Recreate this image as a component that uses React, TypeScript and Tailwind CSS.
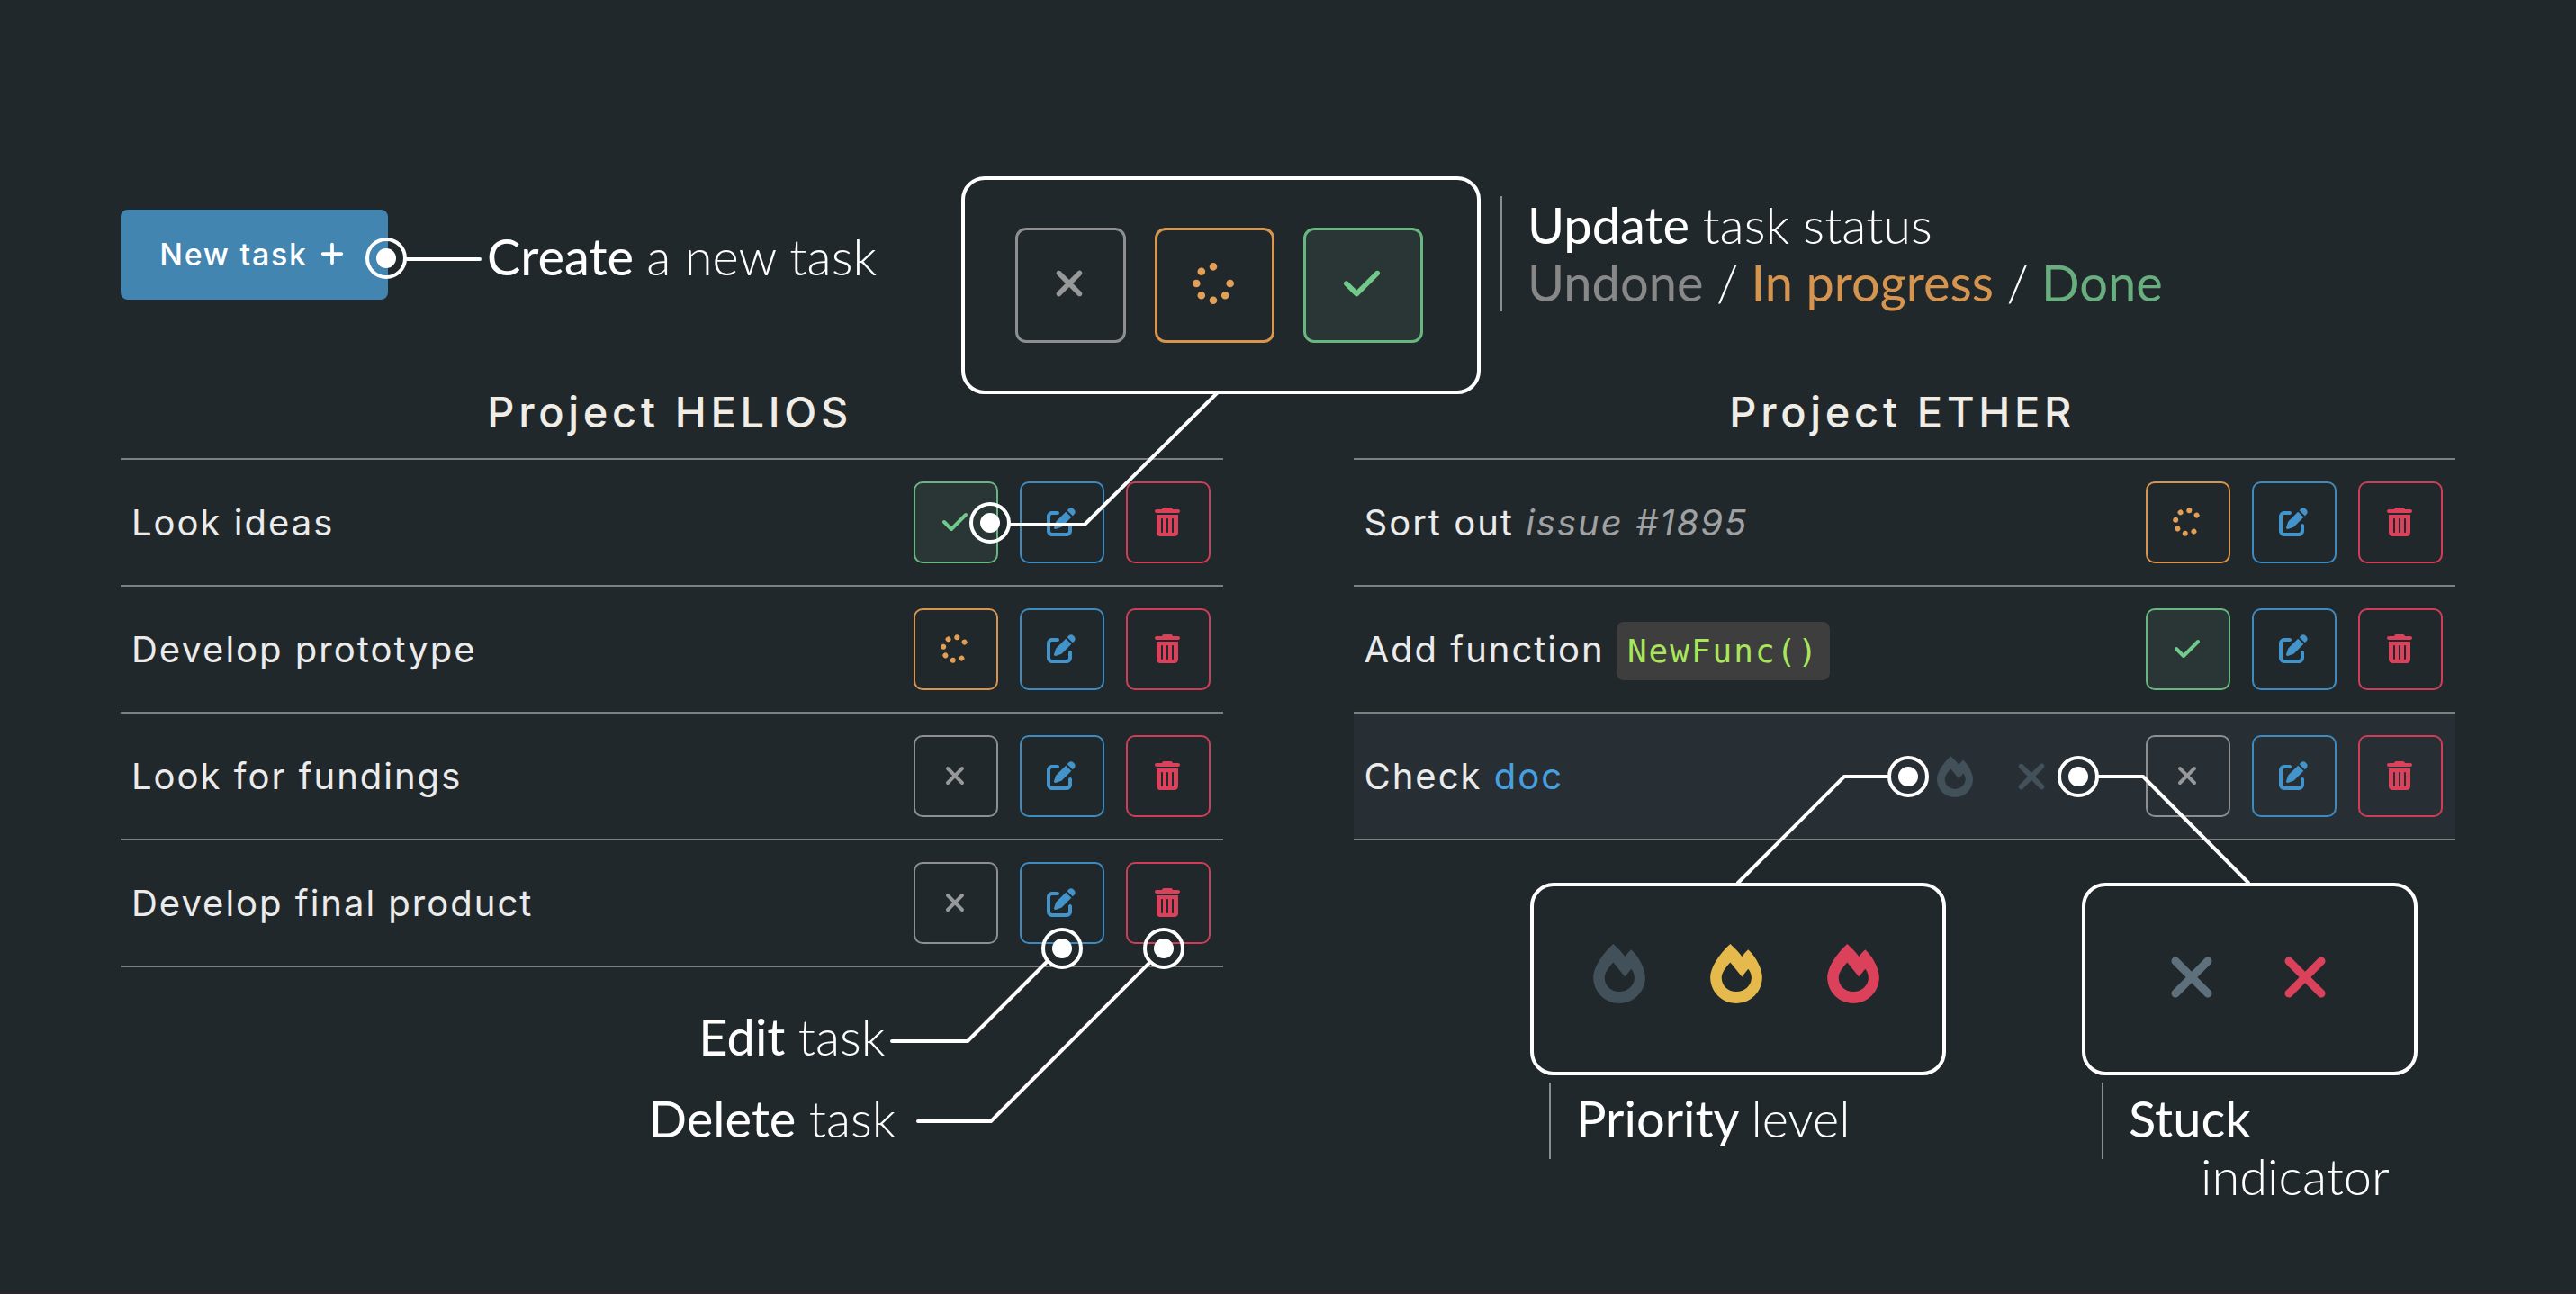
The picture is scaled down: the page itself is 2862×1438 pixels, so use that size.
import type { ReactNode } from "react";
import { FaCheck, FaPenToSquare, FaPlus, FaSpinner, FaTrashCan, FaXmark } from "react-icons/fa6";

type Status = "undone" | "progress" | "done";

/* Callout marker: a ringed dot with a leader line, drawn from the dot's centre. */
function Pin({ points, className }: { points: string; className: string }) {
  return (
    <svg aria-hidden="true" className={`pointer-events-none absolute z-10 size-px overflow-visible ${className}`}>
      <polyline points={points} fill="none" stroke="#fff" strokeWidth="4" strokeLinecap="round" strokeLinejoin="round" />
      <circle r="21" fill="none" stroke="#fff" strokeWidth="4" />
      <circle r="11" fill="#fff" />
    </svg>
  );
}

function Flame({ className }: { className: string }) {
  return (
    <svg aria-hidden="true" viewBox="0 0 174 199" fill="currentColor" className={className}>
      <path
        fillRule="evenodd"
        d="M67 0C82 14 95 27 106 42C112 34 119 26 127 19C155 45 174 86 174 111C174 160 136 199 87 199C38 199 0 160 0 111C0 82 27 36 67 0ZM67 62C50 80 38 98 38 113C38 141 60 160 87 160C114 160 138 140 138 113C138 103 134 93 127 84L106 110Z"
      />
    </svg>
  );
}

const statusStyle: Record<Status, string> = {
  undone: "border-[#8e8f90] text-[#979899]",
  progress: "border-[#d8954e] text-[#e39f55]",
  done: "border-[#69b780] bg-[#293635] text-[#72c98c]",
};

const statusLabel: Record<Status, string> = { undone: "Undone", progress: "In progress", done: "Done" };

function StatusIcon({ status }: { status: Status }) {
  if (status === "undone") return <FaXmark />;
  if (status === "progress") return <FaSpinner />;
  return <FaCheck />;
}

const rowButton = "relative flex h-[91px] w-[94px] items-center justify-center rounded-[10px] border-2 pr-[2px] pb-[2px] text-[32px]";

type TaskProps = {
  name: ReactNode;
  status: Status;
  hovered?: boolean;
  statusPin?: ReactNode;
  editPin?: ReactNode;
  deletePin?: ReactNode;
};

function Task({ name, status, hovered, statusPin, editPin, deletePin }: TaskProps) {
  return (
    <tr className={hovered ? "bg-[#272f35]" : ""}>
      <td className="h-[141px] border-b-2 border-[#7d8082] pl-3 text-[40px] tracking-wider text-[#ebebeb]">{name}</td>
      <td className="h-[141px] border-b-2 border-[#7d8082] pr-[14px]">
        <div className="flex items-center justify-end gap-6">
          {hovered && (
            <div className="relative mr-20 flex items-center gap-[42px] text-[#42505a]">
              <Pin className="top-1/2 -left-8" points="-23,0 -71,0 -189,118" />
              <button aria-label="Priority level">
                <Flame className="h-[46px] w-10" />
              </button>
              <button aria-label="Stuck indicator" className="text-[46px]">
                <FaXmark />
              </button>
              <Pin className="top-1/2 -right-[30px]" points="23,0 72,0 189,118" />
            </div>
          )}
          <button aria-label={statusLabel[status]} className={`${rowButton} ${statusStyle[status]}`}>
            <span className={status === "progress" ? "rotate-[55deg]" : ""}>
              <StatusIcon status={status} />
            </span>
            {statusPin}
          </button>
          <button aria-label="Edit" className={`${rowButton} border-[#3f8bc0] text-[#4294ca]`}>
            <FaPenToSquare />
            {editPin}
          </button>
          <button aria-label="Delete" className={`${rowButton} border-[#cf3e58] text-[#dc415b]`}>
            <FaTrashCan />
            {deletePin}
          </button>
        </div>
      </td>
    </tr>
  );
}

function Project({ title, children }: { title: string; children: ReactNode }) {
  return (
    <>
      <h2 className="h-[71px] pr-1 text-center text-[47px] leading-10 font-medium tracking-widest text-[#f0ede6]">{title}</h2>
      <table className="w-full border-separate border-spacing-0 border-t-2 border-[#7d8082]">
        <tbody>{children}</tbody>
      </table>
    </>
  );
}

const note = "font-['Lato',sans-serif] text-[56px] leading-[64px] whitespace-nowrap text-white";
const card = "flex items-center rounded-[26px] border-4 border-white bg-[#21282b]";
const optionButton = "flex h-32 items-center justify-center rounded-xl border-[3px] pr-1 pb-1 text-[46px]";

export default function App() {
  return (
    <main className="min-h-screen border-b-2 border-[#2a2630] bg-[#21282b] px-[134px] pt-[196px] font-['Inter',sans-serif]">
      <header className="grid grid-cols-[934fr_1660fr]">
        <div className="flex items-start pt-[37px]">
          <button className="relative flex h-[100px] w-[297px] items-center justify-center gap-3 rounded-lg bg-[#4285b1] pr-1 pb-[2px] text-[34px] font-medium tracking-wider text-white">
            New task
            <FaPlus className="text-[30px]" />
            <Pin className="top-[54px] right-px" points="23,1 104,1" />
          </button>
          <p className={`${note} ml-[110px] pt-5`}>
            Create <span className="font-light">a new task</span>
          </p>
        </div>
        <div className="flex items-start">
          <div className={`${card} h-[242px] w-[577px] justify-center gap-8 pr-1`}>
            <button aria-label="Undone" className={`${optionButton} w-[123px] ${statusStyle.undone}`}>
              <StatusIcon status="undone" />
            </button>
            <button aria-label="In progress" className={`${optionButton} w-[133px] ${statusStyle.progress}`}>
              <StatusIcon status="progress" />
            </button>
            <button aria-label="Done" className={`${optionButton} w-[133px] ${statusStyle.done}`}>
              <StatusIcon status="done" />
            </button>
          </div>
          <p className={`${note} mt-[22px] ml-[22px] border-l-2 border-[#8b8e8f] pl-7`}>
            Update <span className="font-light">task status</span>
            <br />
            <span className="text-[#888888]">Undone</span> <span className="font-light">/</span>{" "}
            <span className="text-[#d5954f]">In progress</span> <span className="font-light">/</span>{" "}
            <span className="text-[#68ae7e]">Done</span>
          </p>
        </div>
      </header>

      <div className="grid grid-cols-2 gap-[145px]">
        <section>
          <Project title="Project HELIOS">
            <Task
              name="Look ideas"
              status="done"
              statusPin={<Pin className="top-1/2 right-[6px]" points="23,2 105,2 253,-145" />}
            />
            <Task name="Develop prototype" status="progress" />
            <Task name="Look for fundings" status="undone" />
            <Task
              name="Develop final product"
              status="undone"
              editPin={<Pin className="-bottom-2 left-1/2" points="-17,15 -105,103 -189,103" />}
              deletePin={<Pin className="-bottom-2 left-10" points="-17,17 -192,192 -273,192" />}
            />
          </Project>
          <p className={`${note} mt-[45px] pr-[375px] text-right`}>
            Edit <span className="font-light">task</span>
          </p>
          <p className={`${note} mt-[27px] pr-[363px] text-right`}>
            Delete <span className="font-light">task</span>
          </p>
        </section>

        <section>
          <Project title="Project ETHER">
            <Task
              name={
                <>
                  Sort out <em className="text-[#a0a1a2]">issue #1895</em>
                </>
              }
              status="progress"
            />
            <Task
              name={
                <>
                  Add function{" "}
                  <code className="rounded-lg bg-[#3e3e3e] px-3 py-3 font-['DejaVu_Sans_Mono',monospace] text-[36px] text-[#a9e65c]">
                    NewFunc()
                  </code>
                </>
              }
              status="done"
            />
            <Task
              name={
                <>
                  Check{" "}
                  <a href="#doc" className="text-[#489fe0]">
                    doc
                  </a>
                </>
              }
              status="undone"
              hovered
            />
          </Project>
          <div className="mt-[47px] flex justify-end gap-[151px] pr-[42px]">
            <div className="w-[462px]">
              <div className={`${card} h-[214px] justify-center gap-[72px] pr-1 pb-3`}>
                <Flame className="h-[66px] w-[58px] text-[#42505a]" />
                <Flame className="h-[66px] w-[58px] text-[#e5b94b]" />
                <Flame className="h-[66px] w-[58px] text-[#dc415b]" />
              </div>
              <p className={`${note} mt-2 ml-[21px] h-[85px] border-l-2 border-[#8b8e8f] pt-2 pl-7`}>
                Priority <span className="font-light">level</span>
              </p>
            </div>
            <div className="w-[373px]">
              <div className={`${card} h-[214px] justify-center gap-[54px] pr-1 pb-1 text-[72px]`}>
                <FaXmark className="text-[#5d707c]" />
                <FaXmark className="text-[#dc415b]" />
              </div>
              <p className={`${note} mt-2 ml-[22px] h-[85px] border-l-2 border-[#8b8e8f] pt-2 pl-7`}>
                Stuck
                <span className="block pl-20 font-light">indicator</span>
              </p>
            </div>
          </div>
        </section>
      </div>
    </main>
  );
}
